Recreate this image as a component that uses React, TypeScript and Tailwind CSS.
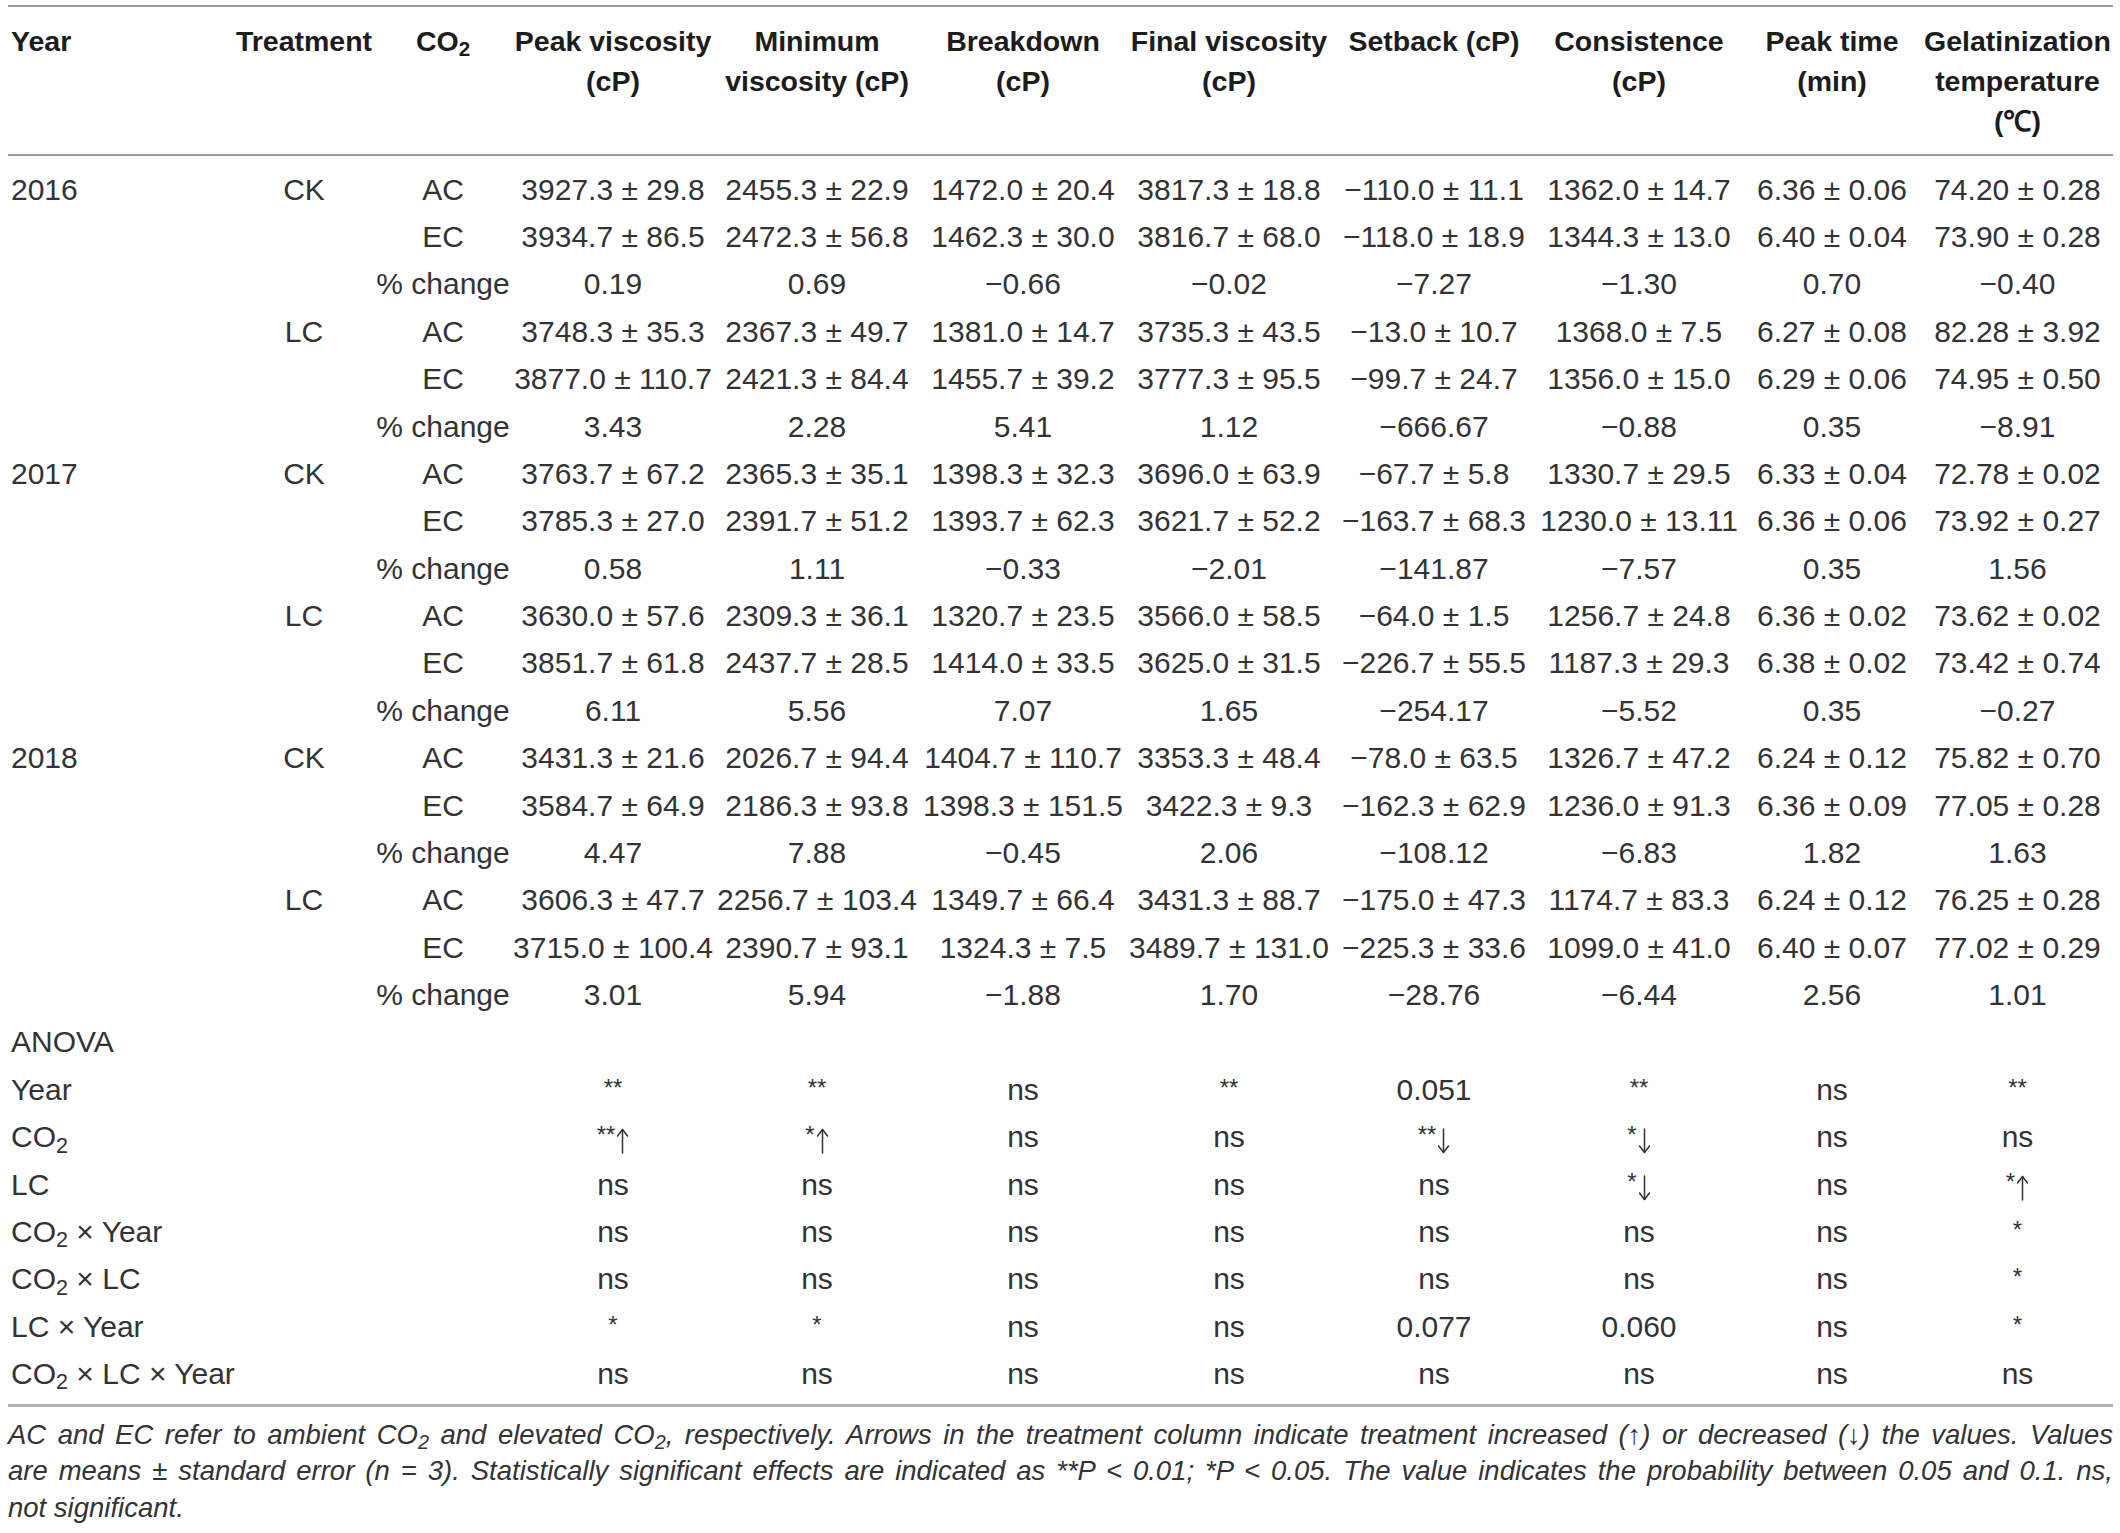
import React from "react";

const GRID =
  "grid grid-cols-[226px_140px_138px_202px_206px_206px_206px_204px_206px_180px_191px]";

type Row = { year?: string; trt?: string; co2: string; vals: string[] };

const M = "\u2212";
const rows: Row[] = [
  { year: "2016", trt: "CK", co2: "AC", vals: ["3927.3 ± 29.8", "2455.3 ± 22.9", "1472.0 ± 20.4", "3817.3 ± 18.8", `${M}110.0 ± 11.1`, "1362.0 ± 14.7", "6.36 ± 0.06", "74.20 ± 0.28"] },
  { co2: "EC", vals: ["3934.7 ± 86.5", "2472.3 ± 56.8", "1462.3 ± 30.0", "3816.7 ± 68.0", `${M}118.0 ± 18.9`, "1344.3 ± 13.0", "6.40 ± 0.04", "73.90 ± 0.28"] },
  { co2: "% change", vals: ["0.19", "0.69", `${M}0.66`, `${M}0.02`, `${M}7.27`, `${M}1.30`, "0.70", `${M}0.40`] },
  { trt: "LC", co2: "AC", vals: ["3748.3 ± 35.3", "2367.3 ± 49.7", "1381.0 ± 14.7", "3735.3 ± 43.5", `${M}13.0 ± 10.7`, "1368.0 ± 7.5", "6.27 ± 0.08", "82.28 ± 3.92"] },
  { co2: "EC", vals: ["3877.0 ± 110.7", "2421.3 ± 84.4", "1455.7 ± 39.2", "3777.3 ± 95.5", `${M}99.7 ± 24.7`, "1356.0 ± 15.0", "6.29 ± 0.06", "74.95 ± 0.50"] },
  { co2: "% change", vals: ["3.43", "2.28", "5.41", "1.12", `${M}666.67`, `${M}0.88`, "0.35", `${M}8.91`] },
  { year: "2017", trt: "CK", co2: "AC", vals: ["3763.7 ± 67.2", "2365.3 ± 35.1", "1398.3 ± 32.3", "3696.0 ± 63.9", `${M}67.7 ± 5.8`, "1330.7 ± 29.5", "6.33 ± 0.04", "72.78 ± 0.02"] },
  { co2: "EC", vals: ["3785.3 ± 27.0", "2391.7 ± 51.2", "1393.7 ± 62.3", "3621.7 ± 52.2", `${M}163.7 ± 68.3`, "1230.0 ± 13.11", "6.36 ± 0.06", "73.92 ± 0.27"] },
  { co2: "% change", vals: ["0.58", "1.11", `${M}0.33`, `${M}2.01`, `${M}141.87`, `${M}7.57`, "0.35", "1.56"] },
  { trt: "LC", co2: "AC", vals: ["3630.0 ± 57.6", "2309.3 ± 36.1", "1320.7 ± 23.5", "3566.0 ± 58.5", `${M}64.0 ± 1.5`, "1256.7 ± 24.8", "6.36 ± 0.02", "73.62 ± 0.02"] },
  { co2: "EC", vals: ["3851.7 ± 61.8", "2437.7 ± 28.5", "1414.0 ± 33.5", "3625.0 ± 31.5", `${M}226.7 ± 55.5`, "1187.3 ± 29.3", "6.38 ± 0.02", "73.42 ± 0.74"] },
  { co2: "% change", vals: ["6.11", "5.56", "7.07", "1.65", `${M}254.17`, `${M}5.52`, "0.35", `${M}0.27`] },
  { year: "2018", trt: "CK", co2: "AC", vals: ["3431.3 ± 21.6", "2026.7 ± 94.4", "1404.7 ± 110.7", "3353.3 ± 48.4", `${M}78.0 ± 63.5`, "1326.7 ± 47.2", "6.24 ± 0.12", "75.82 ± 0.70"] },
  { co2: "EC", vals: ["3584.7 ± 64.9", "2186.3 ± 93.8", "1398.3 ± 151.5", "3422.3 ± 9.3", `${M}162.3 ± 62.9`, "1236.0 ± 91.3", "6.36 ± 0.09", "77.05 ± 0.28"] },
  { co2: "% change", vals: ["4.47", "7.88", `${M}0.45`, "2.06", `${M}108.12`, `${M}6.83`, "1.82", "1.63"] },
  { trt: "LC", co2: "AC", vals: ["3606.3 ± 47.7", "2256.7 ± 103.4", "1349.7 ± 66.4", "3431.3 ± 88.7", `${M}175.0 ± 47.3`, "1174.7 ± 83.3", "6.24 ± 0.12", "76.25 ± 0.28"] },
  { co2: "EC", vals: ["3715.0 ± 100.4", "2390.7 ± 93.1", "1324.3 ± 7.5", "3489.7 ± 131.0", `${M}225.3 ± 33.6`, "1099.0 ± 41.0", "6.40 ± 0.07", "77.02 ± 0.29"] },
  { co2: "% change", vals: ["3.01", "5.94", `${M}1.88`, "1.70", `${M}28.76`, `${M}6.44`, "2.56", "1.01"] },
];

type AnovaRow = { label: React.ReactNode; vals: string[] };
const Sub2 = () => <sub className="text-[0.72em]">2</sub>;

const anova: AnovaRow[] = [
  { label: "Year", vals: ["**", "**", "ns", "**", "0.051", "**", "ns", "**"] },
  { label: <>CO<Sub2 /></>, vals: ["**↑", "*↑", "ns", "ns", "**↓", "*↓", "ns", "ns"] },
  { label: "LC", vals: ["ns", "ns", "ns", "ns", "ns", "*↓", "ns", "*↑"] },
  { label: <>CO<Sub2 /> × Year</>, vals: ["ns", "ns", "ns", "ns", "ns", "ns", "ns", "*"] },
  { label: <>CO<Sub2 /> × LC</>, vals: ["ns", "ns", "ns", "ns", "ns", "ns", "ns", "*"] },
  { label: "LC × Year", vals: ["*", "*", "ns", "ns", "0.077", "0.060", "ns", "*"] },
  { label: <>CO<Sub2 /> × LC × Year</>, vals: ["ns", "ns", "ns", "ns", "ns", "ns", "ns", "ns"] },
];

function Arrow({ down }: { down?: boolean }) {
  return (
    <svg
      width="13"
      height="26"
      viewBox="0 0 13 26"
      className={`inline-block align-[-6px] ${down ? "rotate-180" : ""}`}
      fill="none"
      stroke="currentColor"
      strokeWidth="1.5"
      strokeLinecap="round"
      strokeLinejoin="round"
    >
      <path d="M6.5 1.5 V25" />
      <path d="M1.5 8 L6.5 1.5 L11.5 8" />
    </svg>
  );
}

function AnovaCell({ v }: { v: string }) {
  const m = v.match(/^(\**)(.*)$/);
  const stars = m ? m[1] : "";
  const rest = m ? m[2] : v;
  if (!stars) return <>{rest}</>;
  return (
    <span className="inline-flex items-start">
      <span className="relative top-[-3px] text-[24px] leading-[30px]">{stars}</span>
      {rest === "↑" && (
        <span className="ml-[1px] leading-[30px]">
          <Arrow />
        </span>
      )}
      {rest === "↓" && (
        <span className="ml-[1px] leading-[30px]">
          <Arrow down />
        </span>
      )}
    </span>
  );
}

const ROW = "h-[47.38px] items-center";

export default function App() {
  return (
    <div className="w-[2120px] min-h-[1533px] bg-white pt-[5px] text-[#333333] [font-family:'Liberation_Sans',Arial,sans-serif]">
      <div className="mx-[8px] w-[2105px]">
        <div className="border-t-[2px] border-[#9a9a9a]" />
        {/* header */}
        <div className={`${GRID} pt-[14px] pb-[13px] text-[28.5px] font-bold leading-[40px] text-[#1c1c1c]`}>
          <div className="pl-[3px]">Year</div>
          <div className="text-center">Treatment</div>
          <div className="text-center">
            CO<Sub2 />
          </div>
          <div className="text-center whitespace-nowrap">
            Peak viscosity
            <br />
            (cP)
          </div>
          <div className="text-center whitespace-nowrap">
            Minimum
            <br />
            viscosity (cP)
          </div>
          <div className="text-center">
            Breakdown
            <br />
            (cP)
          </div>
          <div className="text-center whitespace-nowrap">
            Final viscosity
            <br />
            (cP)
          </div>
          <div className="text-center whitespace-nowrap">Setback (cP)</div>
          <div className="text-center">
            Consistence
            <br />
            (cP)
          </div>
          <div className="text-center whitespace-nowrap">
            Peak time
            <br />
            (min)
          </div>
          <div className="text-center whitespace-nowrap">
            Gelatinization
            <br />
            temperature
            <br />
            (℃)
          </div>
        </div>
        <div className="border-t-[2px] border-[#9a9a9a]" />
        {/* body */}
        <div className="pt-[10px] pb-[6px] text-[30px] leading-none">
          {rows.map((r, i) => (
            <div key={i} className={`${GRID} ${ROW}`}>
              <div className="pl-[3px]">{r.year ?? ""}</div>
              <div className="text-center">{r.trt ?? ""}</div>
              <div className="text-center whitespace-nowrap">{r.co2}</div>
              {r.vals.map((v, j) => (
                <div key={j} className="text-center whitespace-nowrap">
                  {v}
                </div>
              ))}
            </div>
          ))}
          <div className={`${GRID} ${ROW}`}>
            <div className="pl-[3px]">ANOVA</div>
          </div>
          {anova.map((r, i) => (
            <div key={i} className={`${GRID} ${ROW}`}>
              <div className="col-span-3 pl-[3px] whitespace-nowrap">{r.label}</div>
              {r.vals.map((v, j) => (
                <div key={j} className="text-center whitespace-nowrap">
                  <AnovaCell v={v} />
                </div>
              ))}
            </div>
          ))}
        </div>
        <div className="border-t-[3px] border-[#b4b4b4]" />
        {/* footnote */}
        <div className="pt-[10px] text-[27.5px] italic leading-[36.5px] text-[#333333]">
          <div className="whitespace-nowrap text-justify [text-align-last:justify]">
            AC and EC refer to ambient CO<Sub2 /> and elevated CO<Sub2 />, respectively. Arrows in the
            treatment column indicate treatment increased (↑) or decreased (↓) the values. Values
          </div>
          <div className="whitespace-nowrap text-justify [text-align-last:justify]">
            are means ± standard error (n = 3). Statistically significant effects are indicated as **P
            &lt; 0.01; *P &lt; 0.05. The value indicates the probability between 0.05 and 0.1. ns,
          </div>
          <div>not significant.</div>
        </div>
      </div>
    </div>
  );
}
